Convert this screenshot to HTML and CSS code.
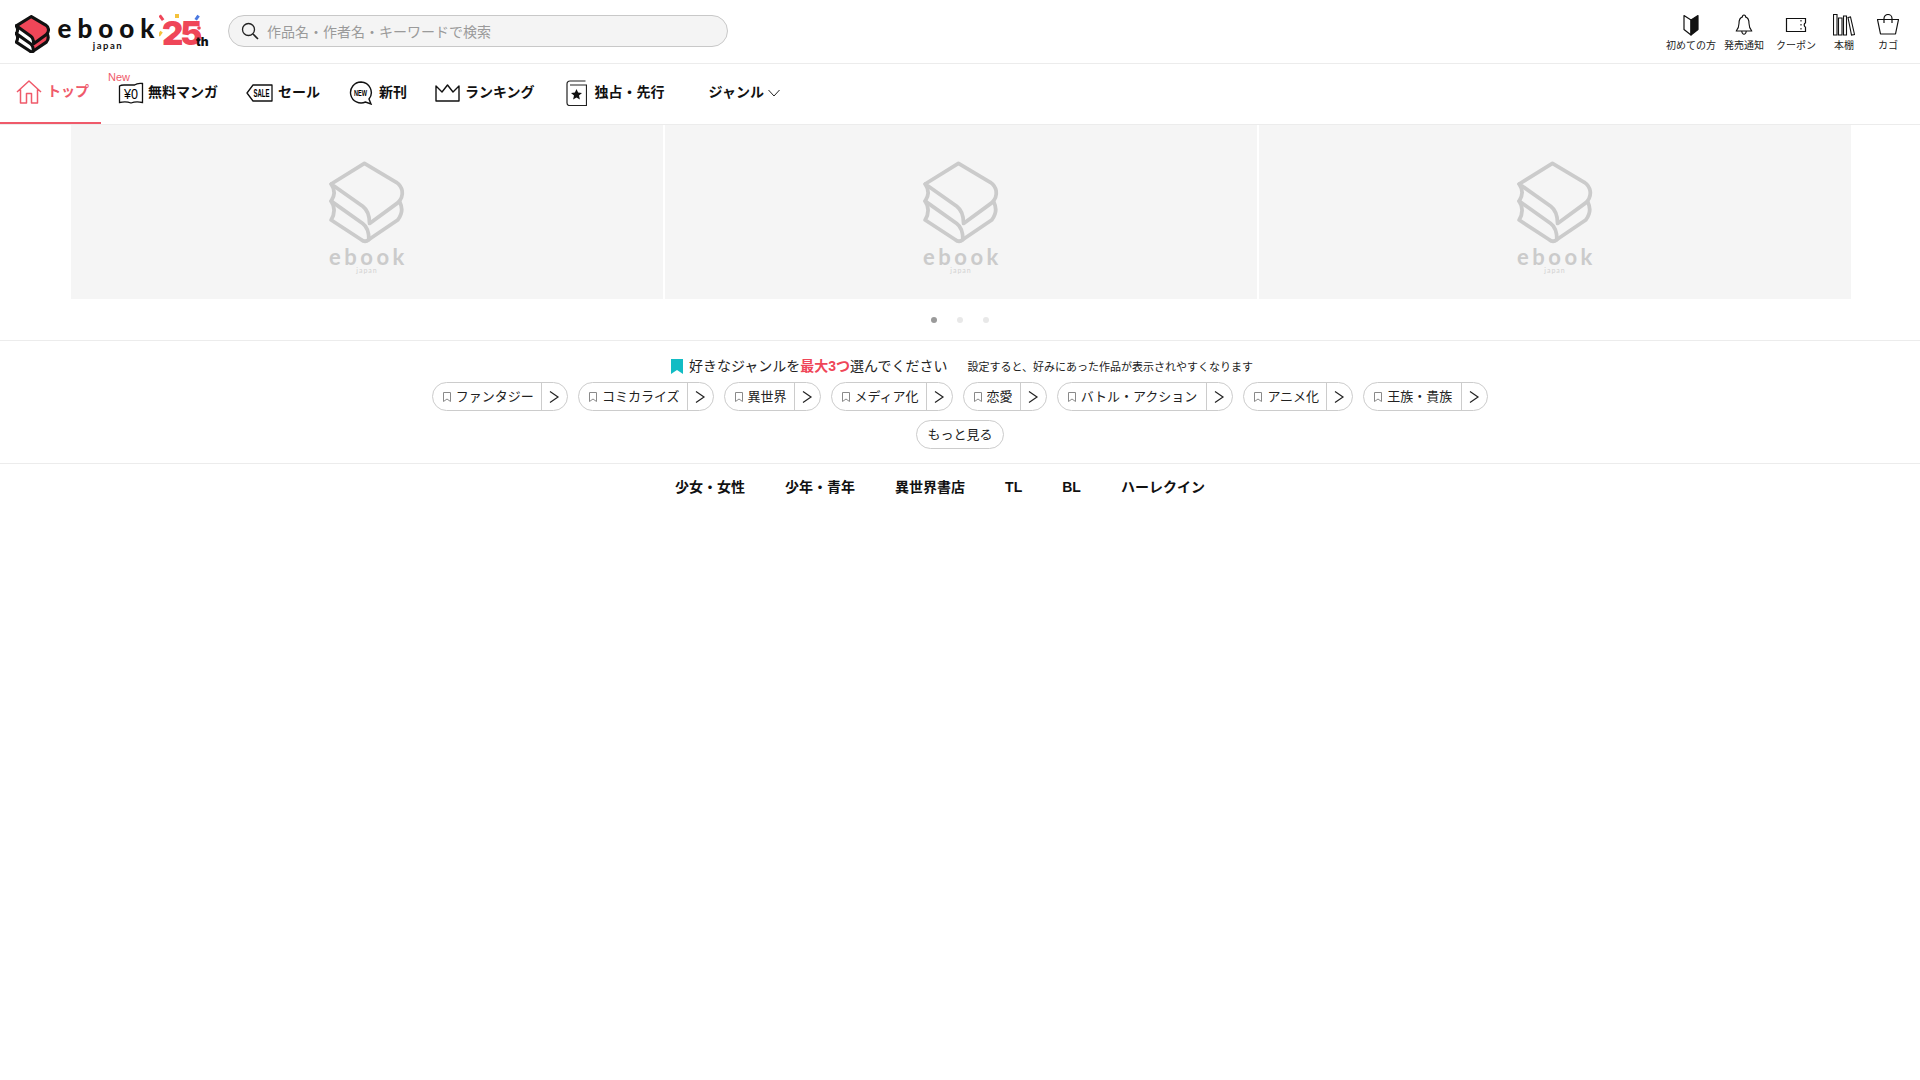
FILE: index.html
```html
<!DOCTYPE html>
<html lang="ja">
<head>
<meta charset="utf-8">
<title>ebookjapan</title>
<link rel="stylesheet" href="styles.css">
</head>
<body>
<svg class="defs" width="0" height="0" aria-hidden="true">
  <symbol id="grey-book" viewBox="60 30 225 245">
    <g fill="none" stroke="#cbcbcb" stroke-width="11" stroke-linejoin="round" stroke-linecap="round">
      <path d="M165 40L68 100L160 165Q180 180 180 215L262 155Q278 140 275 120Q272 105 258 95Z"/>
      <path d="M68 100Q85 125 68 150L160 215Q178 228 178 262"/>
      <path d="M68 150Q85 175 68 205L155 262Q167 272 178 262L262 205Q282 180 268 152"/>
    </g>
  </symbol>
  <symbol id="tag-mark" viewBox="0 0 12 12">
    <path d="M2.500 1.500h7v9L6 8 2.500 10.500z" fill="none" stroke="#8a8a8a" stroke-width="1"/>
  </symbol>
  <symbol id="chev" viewBox="0 0 12 14">
    <path d="M2 1.500 10 7 2 12.500" fill="none" stroke="#222" stroke-width="1.200"/>
  </symbol>
</svg>

<header class="topbar">
  <a class="logo">
    <svg class="logo-book" viewBox="60 30 225 245">
      <path d="M68 100Q85 125 68 150Q85 175 68 205L155 262Q167 272 178 262L180 215L160 165Z" fill="#fff"/>
      <path d="M180 215L262 155Q282 180 268 205L178 262Z" fill="#ef4658"/>
      <path d="M165 40L68 100L160 165Q180 180 180 215L262 155Q278 140 275 120Q272 105 258 95Z" fill="#ef4658"/>
      <g fill="none" stroke="#111" stroke-width="20" stroke-linejoin="round" stroke-linecap="round">
        <path d="M165 40L68 100L160 165Q180 180 180 215L262 155Q278 140 275 120Q272 105 258 95Z"/>
        <path d="M68 100Q85 125 68 150L160 215Q178 228 178 262"/>
        <path d="M68 150Q85 175 68 205L155 262Q167 272 178 262L262 205Q282 180 268 152"/>
      </g>
    </svg>
    <span class="logo-words">
      <span class="logo-ebook">ebook</span>
      <span class="logo-japan">japan</span>
    </span>
    <span class="logo-25">25<span class="logo-th">th</span>
      <svg class="confetti" viewBox="0 0 50 36">
        <rect x="1" y="1" width="3" height="6" fill="#ef4658" transform="rotate(-35 2 4)"/>
        <rect x="16" y="0" width="4" height="4" fill="#f4c23b"/>
        <rect x="37" y="1" width="3" height="5" fill="#4a78e0" transform="rotate(35 38 3)"/>
        <rect x="0" y="17" width="3" height="5" fill="#f4c23b" transform="rotate(35 1 19)"/>
        <circle cx="40" cy="14" r="1.800" fill="#ef4658"/>
      </svg>
    </span>
  </a>
  <div class="search">
    <svg class="search-icon" viewBox="0 0 18 18"><circle cx="7.500" cy="7.500" r="6" fill="none" stroke="#222" stroke-width="1.300"/><path d="M12 12l5 5" stroke="#222" stroke-width="1.600"/></svg>
    <span class="search-hint">作品名・作者名・キーワードで検索</span>
  </div>
  <nav class="utils">
    <a class="util util-first">
      <svg viewBox="0 0 22 22"><path d="M4 1.500 11 6v15l-7-5.500z" fill="#fff" stroke="#111" stroke-width="1.200" stroke-linejoin="round"/><path d="M18 1.500 11 6v15l7-5.500z" fill="#111" stroke="#111" stroke-width="1.200" stroke-linejoin="round"/></svg>
      <span>初めての方</span>
    </a>
    <a class="util util-bell">
      <svg viewBox="0 0 22 22"><path d="M11 1a1.500 1.500 0 0 1 1.500 1.900C15.500 3.800 16 6.500 16 9.500c0 4 1 5.500 2.800 7.500H3.200C5 15 6 13.500 6 9.500c0-3 .5-5.700 3.500-6.600A1.500 1.500 0 0 1 11 1zM8.800 17.500c.3 1.800 1.100 2.700 2.200 2.700s1.900-.9 2.200-2.700" fill="none" stroke="#111" stroke-width="1.100" stroke-linejoin="round"/></svg>
      <span>発売通知</span>
    </a>
    <a class="util util-coupon">
      <svg viewBox="0 0 22 22"><path d="M1.500 4.500h19v4.300a2.500 2.500 0 0 0 0 4.400v4.300h-19z" fill="none" stroke="#111" stroke-width="1.200"/><path d="M16 6v1.500M16 10v1.500M16 14v1.500" fill="none" stroke="#111" stroke-width="1.100"/></svg>
      <span>クーポン</span>
    </a>
    <a class="util util-shelf">
      <svg viewBox="0 0 22 22"><path d="M.5 .5h3.500v20.500H.5zM5.500 4h3.500v17H5.500zM10.500 2h3v19h-3zM15 3.500l2.500-.5 4 17.500-3 .5z" fill="none" stroke="#111" stroke-width="1.100"/></svg>
      <span>本棚</span>
    </a>
    <a class="util util-cart">
      <svg viewBox="0 0 22 22"><path d="M.5 5.500h21l-3 14.500H3.500zM7 9V4.500a4 4 0 0 1 8 0V9" fill="none" stroke="#111" stroke-width="1.200" stroke-linejoin="round"/></svg>
      <span>カゴ</span>
    </a>
  </nav>
</header>

<nav class="mainnav">
  <a class="nav-item nav-home">
    <svg class="ic-home" viewBox="0 0 26 24"><path d="M1 12 13 1l12 11M4.500 9.500V23h6v-9.500h5V23h6V9.500" fill="none" stroke="#ef5a6a" stroke-width="1.500" stroke-linejoin="round"/></svg>
    <span>トップ</span>
  </a>
  <a class="nav-item nav-free">
    <span class="new-badge">New</span>
    <svg class="ic-free" viewBox="0 0 26 22"><path d="M1.500 4v16.500c4-1 8-1 11.500.5 3.500-1.500 7.500-1.500 11.500-.5V1.500c-3.500-.5-6 0-8 1.500H6C4 3 3 3 1.500 4z" fill="none" stroke="#111" stroke-width="1.300"/><text x="13" y="17" text-anchor="middle" textLength="14" lengthAdjust="spacingAndGlyphs" class="ic-free-text">¥0</text></svg>
    <span>無料マンガ</span>
  </a>
  <a class="nav-item nav-sale">
    <svg class="ic-sale" viewBox="0 0 27 18"><path d="M7 1h19v16H7L1 9z" fill="none" stroke="#111" stroke-width="1.300" stroke-linejoin="round"/><text x="15.500" y="13" text-anchor="middle" textLength="16" lengthAdjust="spacingAndGlyphs" class="ic-sale-text">SALE</text></svg>
    <span>セール</span>
  </a>
  <a class="nav-item nav-newbook">
    <svg class="ic-new" viewBox="0 0 24 24"><path d="M12 1a10.500 10.500 0 1 0 4.500 20l5.500 2-2-5A10.500 10.500 0 0 0 12 1z" fill="none" stroke="#111" stroke-width="1.400"/><text x="11.500" y="15" text-anchor="middle" textLength="13" lengthAdjust="spacingAndGlyphs" class="ic-new-text">NEW</text></svg>
    <span>新刊</span>
  </a>
  <a class="nav-item nav-rank">
    <svg class="ic-crown" viewBox="0 0 25 18"><path d="M1 2l6 6 5.500-7L18 8l6-6v15H1z" fill="none" stroke="#111" stroke-width="1.400" stroke-linejoin="round"/></svg>
    <span>ランキング</span>
  </a>
  <a class="nav-item nav-excl">
    <svg class="ic-excl" viewBox="0 0 21 26"><path d="M19.500 1H4C2 1 1 2.500 1 4v19c0 1.500 1 2.500 2.500 2.500h17V5H4" fill="none" stroke="#222" stroke-width="1.200"/><path d="M10.500 9l1.600 3.600 3.900.4-3 2.600.9 3.900-3.400-2-3.400 2 .9-3.900-3-2.600 3.900-.4z" fill="#111"/></svg>
    <span>独占・先行</span>
  </a>
  <a class="nav-item nav-genre">
    <span>ジャンル</span>
    <svg class="ic-down" viewBox="0 0 12 8"><path d="M.5 1 6 7l5.500-6" fill="none" stroke="#222" stroke-width="1"/></svg>
  </a>
</nav>

<section class="hero">
  <div class="banners">
    <div class="banner"><svg class="ph-book"><use href="#grey-book"/></svg><span class="ph-ebook">ebook</span><span class="ph-japan">japan</span></div>
    <div class="banner"><svg class="ph-book"><use href="#grey-book"/></svg><span class="ph-ebook">ebook</span><span class="ph-japan">japan</span></div>
    <div class="banner"><svg class="ph-book"><use href="#grey-book"/></svg><span class="ph-ebook">ebook</span><span class="ph-japan">japan</span></div>
  </div>
  <div class="dots"><i class="dot dot-on"></i><i class="dot"></i><i class="dot"></i></div>
</section>

<section class="genres">
  <div class="genres-head">
    <svg class="mark" viewBox="0 0 12 15"><path d="M0 0h12v15L6 11 0 15z" fill="#12bcc4"/></svg>
    <p class="genres-title">好きなジャンルを<b>最大3つ</b>選んでください</p>
    <p class="genres-sub">設定すると、好みにあった作品が表示されやすくなります</p>
  </div>
  <div class="pills">
    <div class="pill"><span class="pill-main"><svg><use href="#tag-mark"/></svg>ファンタジー</span><span class="pill-go"><svg><use href="#chev"/></svg></span></div>
    <div class="pill"><span class="pill-main"><svg><use href="#tag-mark"/></svg>コミカライズ</span><span class="pill-go"><svg><use href="#chev"/></svg></span></div>
    <div class="pill"><span class="pill-main"><svg><use href="#tag-mark"/></svg>異世界</span><span class="pill-go"><svg><use href="#chev"/></svg></span></div>
    <div class="pill"><span class="pill-main"><svg><use href="#tag-mark"/></svg>メディア化</span><span class="pill-go"><svg><use href="#chev"/></svg></span></div>
    <div class="pill"><span class="pill-main"><svg><use href="#tag-mark"/></svg>恋愛</span><span class="pill-go"><svg><use href="#chev"/></svg></span></div>
    <div class="pill"><span class="pill-main pill-main-wide"><svg><use href="#tag-mark"/></svg>バトル・アクション</span><span class="pill-go"><svg><use href="#chev"/></svg></span></div>
    <div class="pill"><span class="pill-main"><svg><use href="#tag-mark"/></svg>アニメ化</span><span class="pill-go"><svg><use href="#chev"/></svg></span></div>
    <div class="pill"><span class="pill-main pill-main-wide"><svg><use href="#tag-mark"/></svg>王族・貴族</span><span class="pill-go"><svg><use href="#chev"/></svg></span></div>
    <div class="pill pill-more">もっと見る</div>
  </div>
</section>

<nav class="tabs">
  <a class="tab">少女・女性</a>
  <a class="tab">少年・青年</a>
  <a class="tab">異世界書店</a>
  <a class="tab">TL</a>
  <a class="tab">BL</a>
  <a class="tab">ハーレクイン</a>
</nav>
</body>
</html>
```
FILE: styles.css
```css
* { box-sizing: border-box; }
html, body { margin: 0; padding: 0; }
body {
  background: #fff;
  color: #111;
  font-family: "Liberation Sans", "Noto Sans CJK JP", sans-serif;
  overflow: hidden;
  height: 1080px;
}
.defs { display: block; height: 0; }
p { margin: 0; }

/* top bar */
.topbar {
  height: 64px;
  border-bottom: 1px solid #ececec;
  display: flex;
  align-items: flex-start;
  position: relative;
}
.logo {
  width: 228px;
  height: 63px;
  padding: 15px 0 0 15px;
  display: flex;
  align-items: flex-start;
  flex: none;
}
.logo-book { width: 35px; height: 38px; flex: none; }
.logo-words {
  width: 102px;
  margin-left: 6px;
  display: flex;
  flex-direction: column;
  align-items: center;
}
.logo-ebook {
  font-family: Lato, sans-serif;
  font-weight: 900;
  font-size: 26px;
  line-height: 20px;
  letter-spacing: 6px;
  margin-top: 3px;
  margin-right: -4px;
  color: #111;
}
.logo-japan {
  font-family: Lato, sans-serif;
  font-weight: 700;
  font-size: 9.500px;
  line-height: 11px;
  letter-spacing: 1.500px;
  margin-top: 2px;
  margin-left: 2px;
}
.logo-25 {
  position: relative;
  font-family: Inter, sans-serif;
  font-weight: 900;
  font-size: 33px;
  line-height: 30px;
  letter-spacing: -3px;
  color: #ef4658;
  height: 30px;
  margin-left: 4px;
  margin-top: 3px;
}
.logo-th {
  position: absolute;
  left: 34px;
  top: 17px;
  font-size: 12px;
  line-height: 14px;
  letter-spacing: 0;
  color: #111;
}
.confetti { position: absolute; left: -3px; top: -4px; width: 50px; height: 36px; }

.search {
  margin-top: 15px;
  width: 500px;
  height: 32px;
  border: 1px solid #c8c8c8;
  border-radius: 16px;
  background: #f4f4f4;
  display: flex;
  align-items: center;
  padding-left: 12px;
  flex: none;
}
.search-icon { width: 18px; height: 18px; flex: none; }
.search-hint {
  margin-left: 8px;
  font-size: 14px;
  color: #9a9a9a;
}

.utils {
  margin-left: auto;
  display: flex;
  padding: 14px 21px 0 0;
}
.util {
  display: flex;
  flex-direction: column;
  align-items: center;
  font-size: 10px;
  line-height: 12px;
  color: #222;
}
.util svg { width: 22px; height: 22px; margin-bottom: 4px; }
.util span { white-space: nowrap; }
.util-bell { margin-left: 8px; }
.util-coupon { margin-left: 12px; }
.util-shelf { margin-left: 17px; }
.util-cart { margin-left: 22px; }

/* main nav */
.mainnav {
  height: 61px;
  border-bottom: 1px solid #ececec;
  display: flex;
  align-items: flex-start;
  position: relative;
}
.nav-item {
  display: flex;
  align-items: center;
  height: 60px;
  padding-bottom: 3px;
  font-size: 14px;
  font-weight: 700;
  color: #111;
  position: relative;
  flex: none;
  white-space: nowrap;
}
.nav-item > span:not(.new-badge) { padding-bottom: 3px; }
.nav-home {
  width: 101px;
  padding-left: 16px;
  color: #ef5a6a;
  border-bottom: 2px solid #ef5a6a;
}
.ic-home { width: 26px; height: 24px; margin-right: 5px; flex: none; }
.nav-free { margin-left: 17px; }
.ic-free { width: 26px; height: 22px; margin-right: 4px; flex: none; }
.ic-free-text { font-size: 14px; font-weight: 400; }
.new-badge {
  position: absolute;
  left: -10px;
  top: 6px;
  font-size: 11px;
  line-height: 14px;
  font-weight: 400;
  color: #ef5a6a;
}
.nav-sale { margin-left: 28px; }
.ic-sale { width: 27px; height: 18px; margin-right: 5px; flex: none; }
.ic-sale-text { font-size: 10px; font-weight: 700; }
.nav-newbook { margin-left: 29px; }
.ic-new { width: 24px; height: 24px; margin-right: 6px; flex: none; }
.ic-new-text { font-size: 9px; font-weight: 700; }
.nav-rank { margin-left: 28px; }
.ic-crown { width: 25px; height: 18px; margin-right: 5px; flex: none; }
.nav-excl { margin-left: 31px; }
.ic-excl { width: 21px; height: 26px; margin-right: 8px; flex: none; }
.nav-genre { margin-left: 44px; }
.ic-down { width: 12px; height: 8px; margin-left: 4px; flex: none; }

/* banners */
.hero {
  height: 216px;
  border-bottom: 1px solid #ececec;
}
.banners {
  display: flex;
  justify-content: center;
  gap: 2px;
  height: 174px;
  padding-left: 2px;
}
.banner {
  width: 592px;
  background: #f5f5f5;
  display: flex;
  flex-direction: column;
  align-items: center;
  padding-top: 35px;
  flex: none;
}
.ph-book { width: 78px; height: 84px; flex: none; }
.ph-ebook {
  font-family: Lato, sans-serif;
  font-weight: 700;
  font-size: 22px;
  line-height: 18px;
  letter-spacing: 3.500px;
  color: #cbcbcb;
  margin-top: 4px;
  margin-right: -3px;
}
.ph-japan {
  font-family: Lato, sans-serif;
  font-size: 7px;
  line-height: 8px;
  letter-spacing: 1px;
  color: #d2d2d2;
}
.dots {
  display: flex;
  justify-content: center;
  gap: 20px;
  padding-top: 18px;
}
.dot { width: 6px; height: 6px; border-radius: 50%; background: #e8e8e8; }
.dot-on { background: #9a9a9a; }

/* genres */
.genres {
  height: 123px;
  border-bottom: 1px solid #ececec;
  display: flex;
  flex-direction: column;
  align-items: center;
  padding-top: 17px;
}
.genres-head {
  display: flex;
  align-items: center;
  height: 16px;
  margin-left: 4px;
}
.mark { width: 12px; height: 15px; margin-right: 6px; flex: none; }
.genres-title { font-size: 14px; color: #222; white-space: nowrap; padding-bottom: 2px; }
.genres-title b { color: #ef4658; }
.genres-sub { font-size: 11px; color: #222; margin-left: 20px; white-space: nowrap; }
.pills {
  width: 1100px;
  margin-top: 8px;
  display: flex;
  flex-wrap: wrap;
  justify-content: center;
  gap: 9px 10px;
}
.pill {
  height: 29px;
  border: 1px solid #ccc;
  border-radius: 15px;
  display: flex;
  align-items: stretch;
  font-size: 13px;
  line-height: 24px;
  color: #222;
  white-space: nowrap;
}
.pill-main {
  display: flex;
  align-items: center;
  padding: 0 7px 0 8px;
  border-right: 1px solid #ccc;
}
.pill-main-wide { padding-right: 9px; }
.pill-main svg { width: 12px; height: 12px; margin-right: 3px; flex: none; }
.pill-go {
  width: 25px;
  display: flex;
  align-items: center;
  justify-content: center;
  padding-right: 1px;
}
.pill-go svg { width: 12px; height: 14px; }
.pill-more {
  align-items: center;
  padding: 0 10px;
}

/* tabs */
.tabs {
  display: flex;
  justify-content: center;
  padding-top: 14px;
}
.tab {
  font-size: 14px;
  font-weight: 700;
  line-height: 18px;
  color: #111;
  margin-right: 40px;
  white-space: nowrap;
}
```
